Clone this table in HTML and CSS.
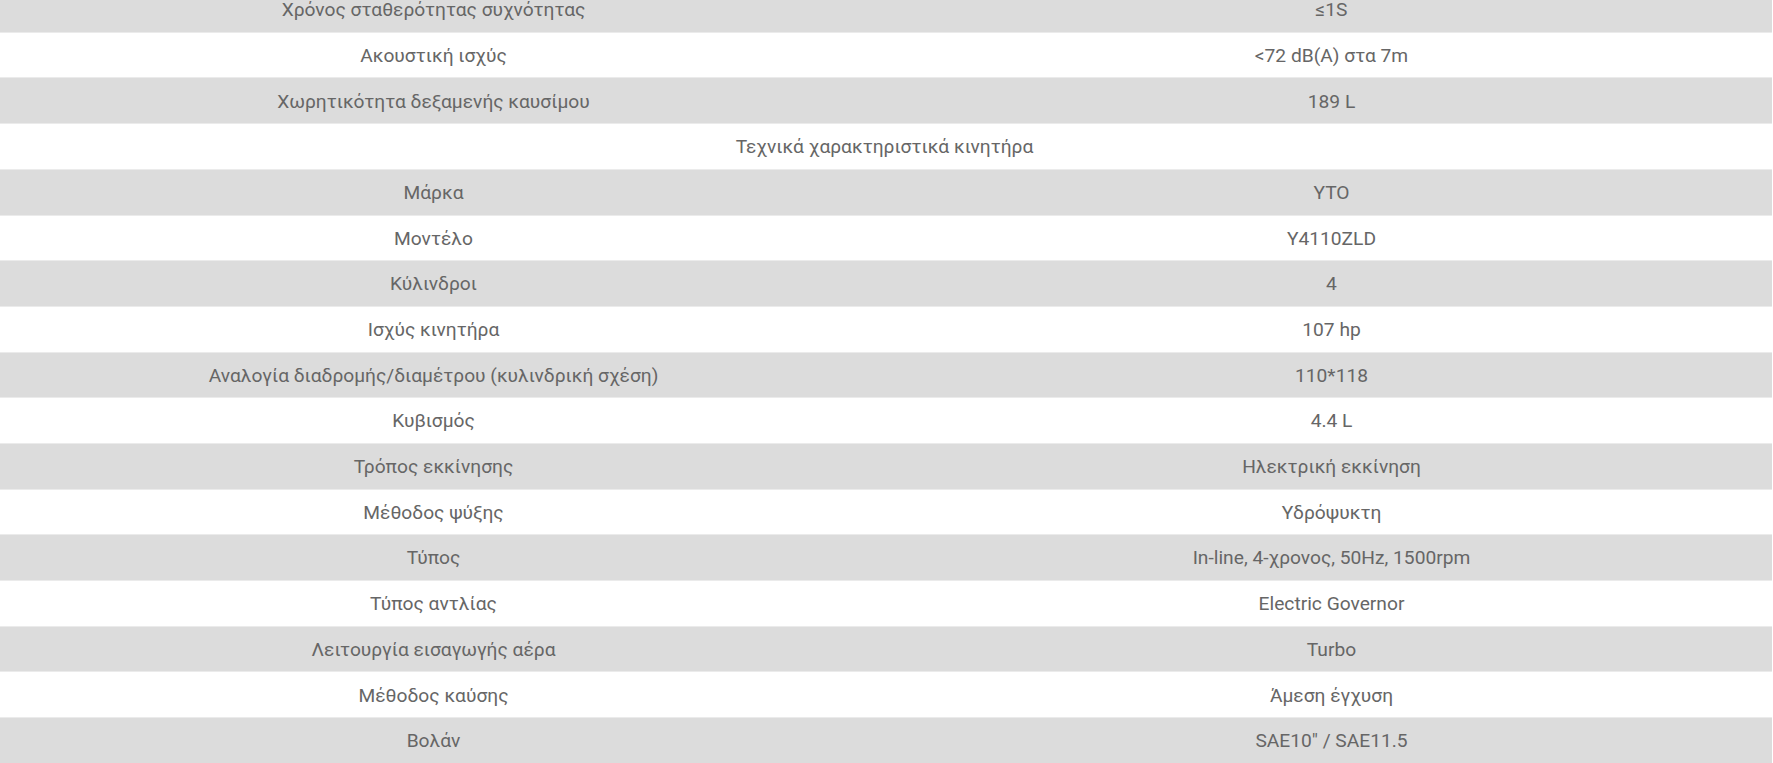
FILE: index.html
```html
<!DOCTYPE html>
<html lang="el">
<head>
<meta charset="utf-8">
<title>Τεχνικά χαρακτηριστικά</title>
<link rel="stylesheet" href="styles.css">
</head>
<body>
<div class="specs">
  <div class="row first"><div class="label">Χρόνος σταθερότητας συχνότητας</div><div class="value">≤1S</div></div>
  <div class="row"><div class="label">Ακουστική ισχύς</div><div class="value">&lt;72 dB(A) στα 7m</div></div>
  <div class="row"><div class="label">Χωρητικότητα δεξαμενής καυσίμου</div><div class="value">189 L</div></div>
  <div class="row section"><div class="heading">Τεχνικά χαρακτηριστικά κινητήρα</div></div>
  <div class="row"><div class="label">Μάρκα</div><div class="value">YTO</div></div>
  <div class="row"><div class="label">Μοντέλο</div><div class="value">Y4110ZLD</div></div>
  <div class="row"><div class="label">Κύλινδροι</div><div class="value">4</div></div>
  <div class="row"><div class="label">Ισχύς κινητήρα</div><div class="value">107 hp</div></div>
  <div class="row"><div class="label">Αναλογία διαδρομής/διαμέτρου (κυλινδρική σχέση)</div><div class="value">110*118</div></div>
  <div class="row"><div class="label">Κυβισμός</div><div class="value">4.4 L</div></div>
  <div class="row"><div class="label">Τρόπος εκκίνησης</div><div class="value">Ηλεκτρική εκκίνηση</div></div>
  <div class="row"><div class="label">Μέθοδος ψύξης</div><div class="value">Υδρόψυκτη</div></div>
  <div class="row"><div class="label">Τύπος</div><div class="value">In-line, 4-χρονος, 50Hz, 1500rpm</div></div>
  <div class="row"><div class="label">Τύπος αντλίας</div><div class="value">Electric Governor</div></div>
  <div class="row"><div class="label">Λειτουργία εισαγωγής αέρα</div><div class="value">Turbo</div></div>
  <div class="row"><div class="label">Μέθοδος καύσης</div><div class="value">Άμεση έγχυση</div></div>
  <div class="row"><div class="label">Βολάν</div><div class="value">SAE10" / SAE11.5</div></div>
</div>
</body>
</html>
```
FILE: styles.css
```css
html, body {
  margin: 0;
  padding: 0;
  background: #ffffff;
  overflow: hidden;
}

body {
  font-family: Roboto, "Noto Sans", "DejaVu Sans", sans-serif;
  font-size: 19.2px;
  color: #666666;
}

.specs {
  margin-top: -12.9px;
  width: calc(100% - 1px);
  display: flex;
  flex-direction: column;
}

.row {
  display: grid;
  grid-template-columns: 891px 1fr;
  align-items: center;
  height: 45.7px;
  flex: 0 0 auto;
  box-sizing: border-box;
  padding-top: 1.5px;
  border-bottom: 1px solid #ebebeb;
  line-height: 22px;
}

.row:nth-child(odd) {
  background: #dcdcdc;
}

.row:nth-child(even) {
  background: #ffffff;
}

.row.first {
  box-shadow: inset 0 14px 4px -12px rgba(0, 0, 0, 0.08);
}

.label {
  text-align: center;
  padding-right: 24px;
}

.value {
  text-align: center;
}

.heading {
  grid-column: 1 / -1;
  text-align: center;
  padding-right: 3px;
}
```
